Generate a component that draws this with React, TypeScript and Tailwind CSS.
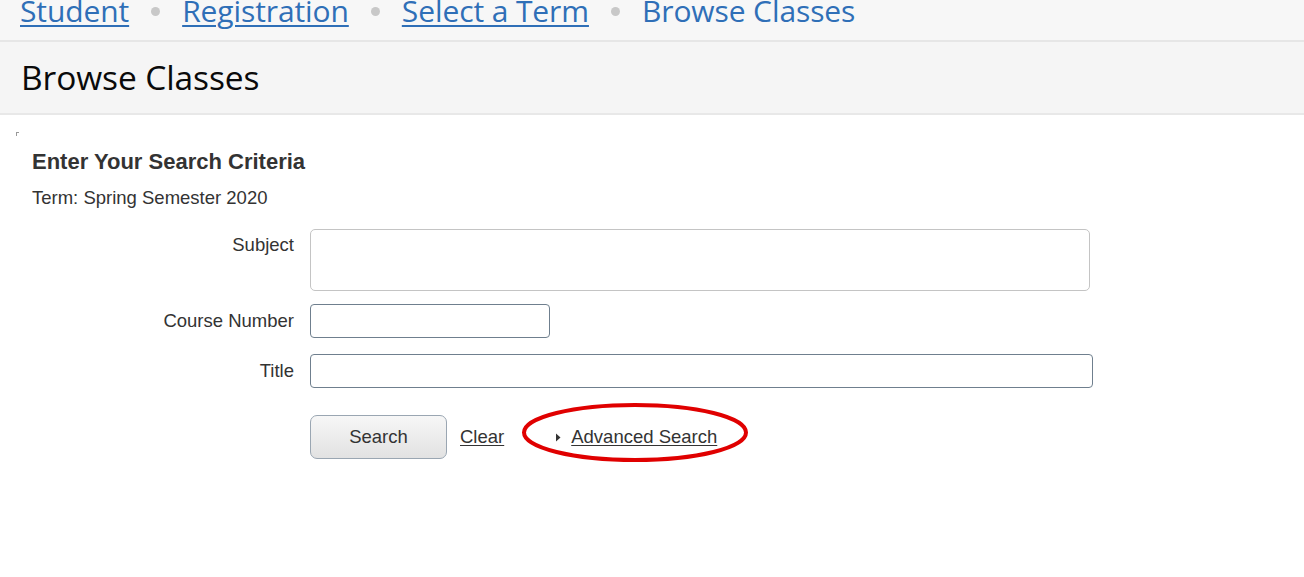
import React from 'react';

const crumbs = ['Student', 'Registration', 'Select a Term'];

function Dot() {
  return <span className="mx-[22px] inline-block h-[9px] w-[9px] rounded-full bg-[#c8c8c8] align-middle" />;
}

export default function App() {
  return (
    <div className="min-h-[577px] bg-white">
      {/* Breadcrumb */}
      <div
        className="h-[42px] overflow-hidden border-b-2 border-[#e6e6e6] bg-[#f7f7f7] pl-[20px]"
        style={{ fontFamily: '"Open Sans", sans-serif' }}
      >
        <div className="-mt-[11px] flex items-center text-[30px] leading-[44px] tracking-[-0.1px] text-[#2f6fb7]">
          {crumbs.map((c) => (
            <React.Fragment key={c}>
              <a href="#" className="underline decoration-[1.5px] underline-offset-[3px]">
                {c}
              </a>
              <Dot />
            </React.Fragment>
          ))}
          <span>Browse Classes</span>
        </div>
      </div>

      {/* Page title */}
      <div
        className="flex h-[73px] items-center border-b-2 border-[#e8e8e8] bg-[#f5f5f5] pl-[21px]"
        style={{ fontFamily: '"Open Sans", sans-serif' }}
      >
        <h1 className="text-[33.5px] font-medium tracking-[-0.1px] text-[#0a0a0a]">Browse Classes</h1>
      </div>

      {/* Form */}
      <div className="relative px-[32px] pt-[16px]" style={{ fontFamily: '"Liberation Sans", Arial, sans-serif' }}>
        <span className="absolute left-[16px] top-[17px] h-[4px] w-[3px] border-l border-t border-[#999]" />
        <h2 className="mt-[19px] text-[22px] font-bold leading-[24px] text-[#333]">Enter Your Search Criteria</h2>
        <p className="mt-[13px] text-[18.5px] leading-[22px] text-[#333]">Term: Spring Semester 2020</p>

        <div className="mt-[20px] grid grid-cols-[262px_1fr] gap-x-[16px] text-[18.5px] text-[#333]">
          <label className="pt-[5px] text-right leading-[22px]">Subject</label>
          <div className="h-[62px] w-[780px] rounded-[5px] border border-[#c4c4c4] bg-white" />

          <label className="mt-[13px] flex h-[34px] items-center justify-end">Course Number</label>
          <input className="mt-[13px] h-[34px] w-[240px] rounded-[4px] border-[1.5px] border-[#6f7f8e] bg-white" />

          <label className="mt-[16px] flex h-[34px] items-center justify-end">Title</label>
          <input className="mt-[16px] h-[34px] w-[783px] rounded-[4px] border-[1.5px] border-[#6f7f8e] bg-white" />

          <div />
          <div className="mt-[27px] flex items-center">
            <button className="h-[44px] w-[137px] rounded-[7px] border border-[#9aa6b2] bg-gradient-to-b from-[#f7f7f7] to-[#e2e2e2] text-[18.5px] text-[#333]">
              Search
            </button>
            <a href="#" className="ml-[13px] underline underline-offset-2">
              Clear
            </a>
            <div className="relative ml-[51px] flex items-center">
              <svg width="6" height="9" viewBox="0 0 6 9" className="mr-[10px]">
                <path d="M1 0.5 L5.5 4.5 L1 8.5 Z" fill="#333" />
              </svg>
              <a href="#" className="underline underline-offset-2">
                Advanced Search
              </a>
              <svg
                className="pointer-events-none absolute -left-[35px] -top-[22px]"
                width="230"
                height="64"
                viewBox="0 0 230 64"
              >
                <ellipse cx="115" cy="31.5" rx="111" ry="27.5" fill="none" stroke="#e00000" strokeWidth="4" />
              </svg>
            </div>
          </div>
        </div>
      </div>
    </div>
  );
}
